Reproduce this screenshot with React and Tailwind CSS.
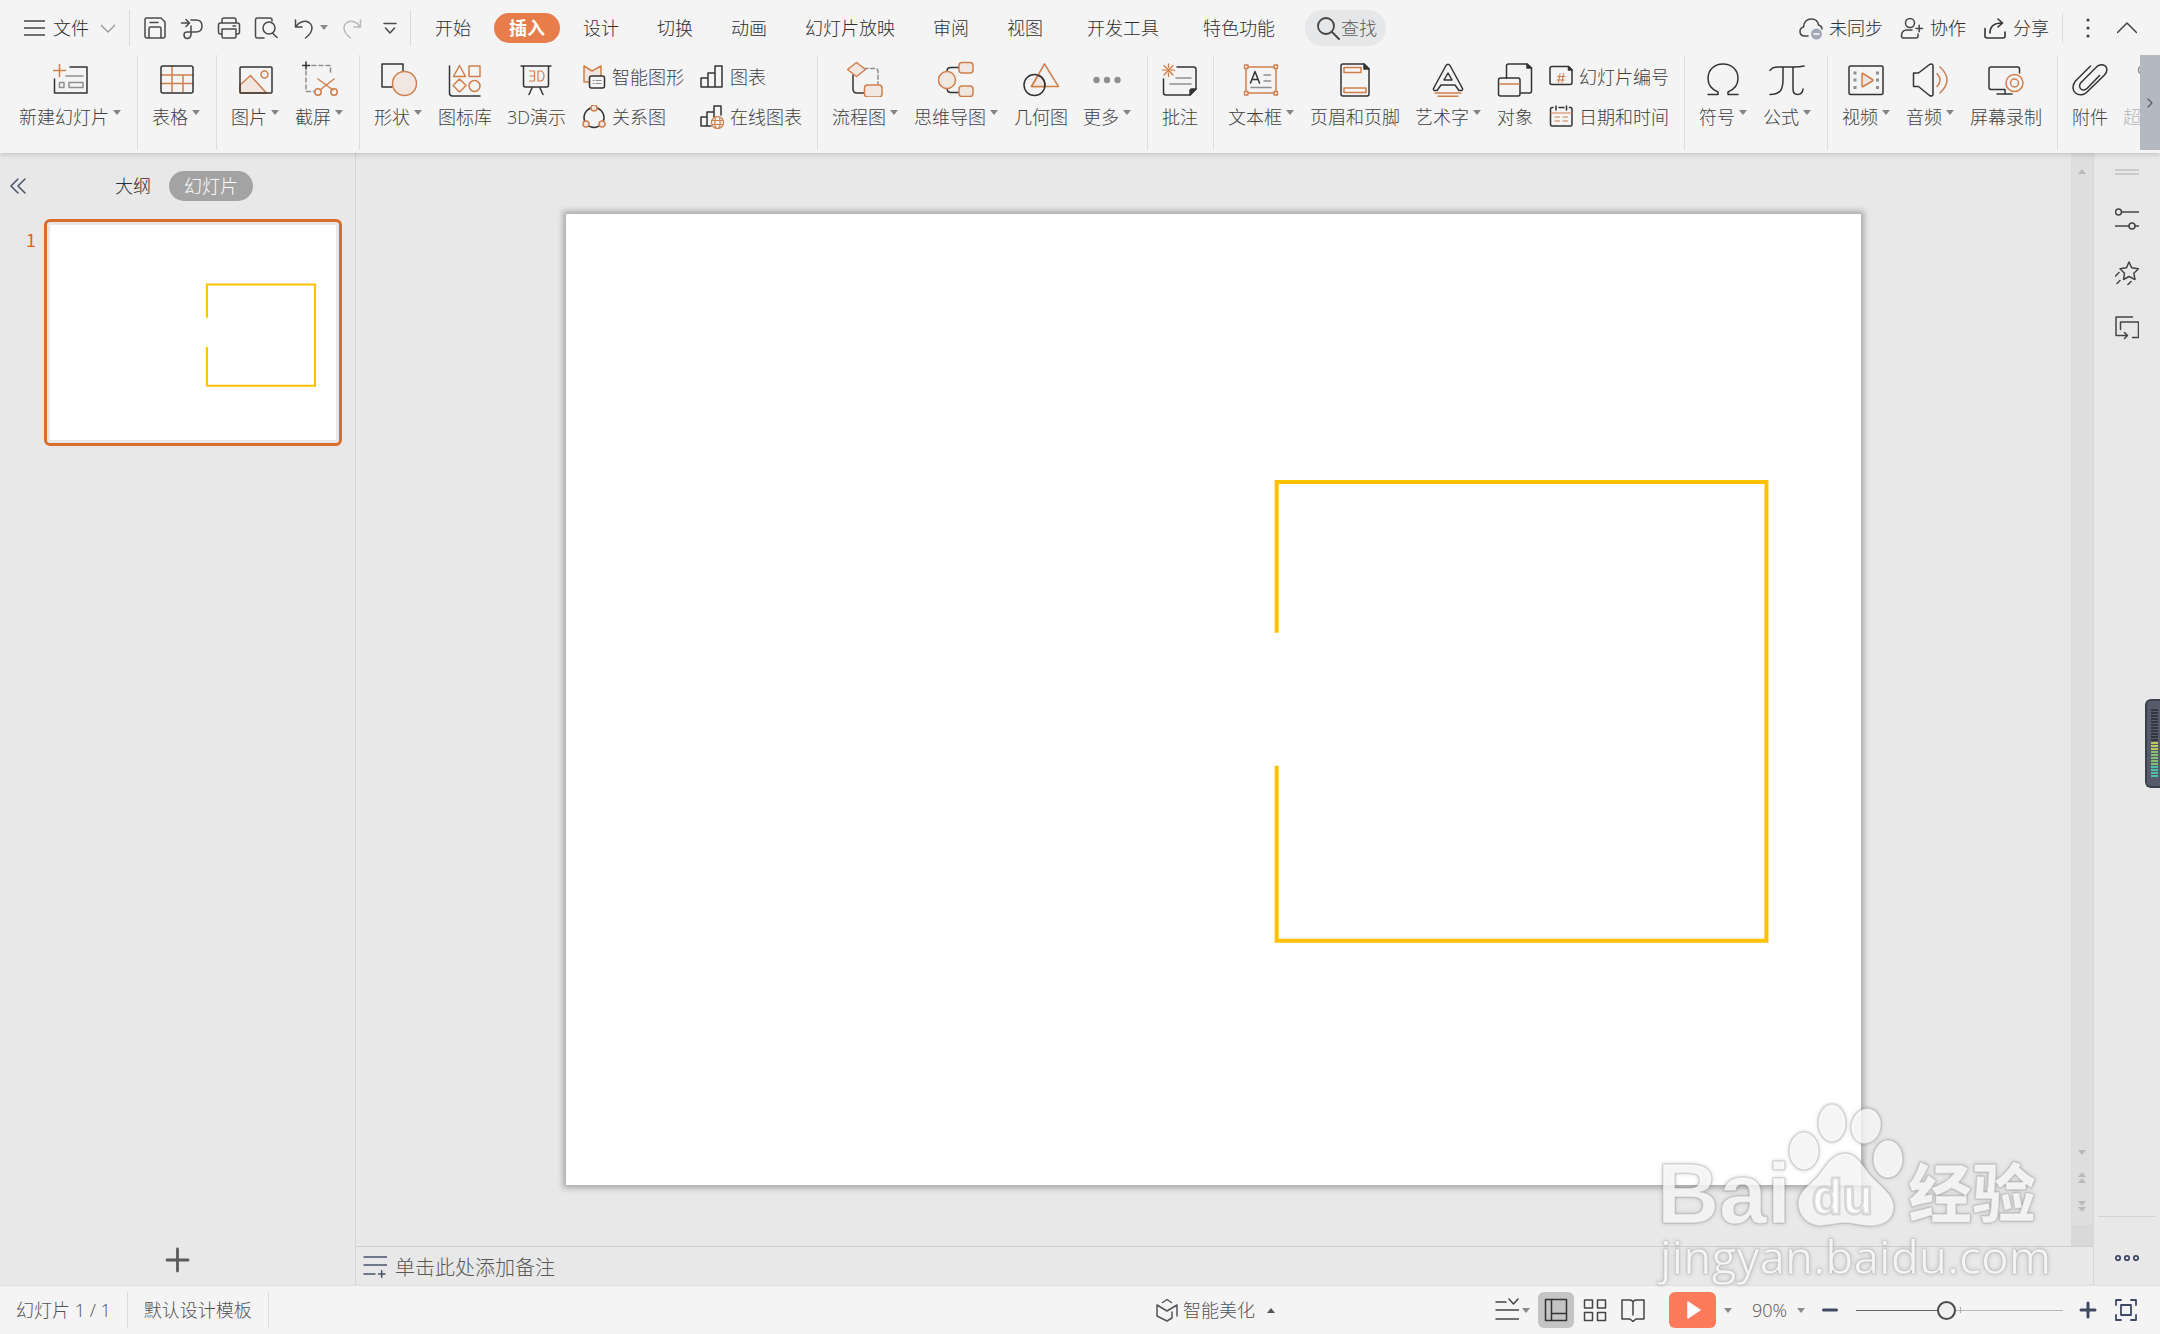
import { useState } from "react";

const OR = "#cf7f4b";
const TINT = "#f2e6e0";
const GREY = "#8f8f8f";

function Icon({ className = "w-6 h-6", box = 24, children, ...rest }) {
  return (
    <svg className={`${className} shrink-0`} viewBox={`0 0 ${box} ${box}`} fill="none" stroke="#333" strokeWidth="1.5" strokeLinecap="round" strokeLinejoin="round" aria-hidden="true" {...rest}>
      {children}
    </svg>
  );
}

const Big = ({ children }) => <Icon className="w-9 h-9" box={36}>{children}</Icon>;

function Caret({ up = false, className = "" }) {
  return (
    <svg className={`w-2 h-[5px] shrink-0 ${className}`} viewBox="0 0 8 5" aria-hidden="true">
      <path d={up ? "M0 5H8L4 0Z" : "M0 0H8L4 5Z"} fill="currentColor" />
    </svg>
  );
}

const NewSlideIcon = () => (
  <Big>
    <path d="M17 6H34V32H1.500V18" />
    <path d="M13 15H30M6.500 21.500h4.500v5h-4.500zM16 21.500h14v5H16z" stroke={GREY} />
    <path d="M0.500 9.500H12.500M6.500 3.500V15.500" stroke={OR} />
  </Big>
);
const TableIcon = () => (
  <Big>
    <path d="M13 5V31M24 14V31M2 14H34M2 22.500H34" stroke={OR} />
    <rect x="2" y="5" width="32" height="27" rx="2" />
  </Big>
);
const PictureIcon = () => (
  <Big>
    <path d="M2 24L12.500 14.500L28.500 32H2Z" fill={TINT} stroke={OR} />
    <circle cx="26.500" cy="13.500" r="3.500" stroke={OR} />
    <rect x="2" y="6" width="32" height="26" rx="1" />
  </Big>
);
const ClipIcon = () => (
  <Big>
    <path d="M10 4.500H28.500V14M4 10V30.500H12" stroke={GREY} strokeDasharray="4 3" />
    <path d="M0.500 4.500H7.500M4 1V8" />
    <path d="M16 18L31 29M32 18L18 29" stroke={OR} />
    <circle cx="16" cy="31" r="3.200" stroke={OR} />
    <circle cx="32" cy="31" r="3.200" stroke={OR} />
  </Big>
);
const ShapesIcon = () => (
  <Big>
    <path d="M11 26H1V3H22V10" />
    <circle cx="23.500" cy="22.500" r="12" fill={TINT} stroke={OR} />
  </Big>
);
const IconLibIcon = () => (
  <Big>
    <path d="M2.500 5V32Q2.500 35 5.500 35H33" />
    <path d="M12.500 4.500L18.500 15.500H6.500ZM22 5h11v10.500H22zM12.500 18L19 24.500L12.500 31L6 24.500Z" stroke={OR} />
    <circle cx="27.500" cy="25" r="5.500" stroke={OR} />
  </Big>
);
const Show3DIcon = () => (
  <Big>
    <path d="M3 5H33M5.500 5V24Q5.500 26 7.500 26H28.500Q30.500 26 30.500 24V5M14 27L11 33.500M22 27L25 33.500" />
    <path d="M11.500 10H16.500V20H11.500M12 15H16.500M20 10H22Q26 10 26 15T22 20H20Z" stroke={OR} strokeWidth="1.200" />
  </Big>
);
const SmartArtIcon = () => (
  <Icon>
    <path d="M7 17H2V1L10 6L19 1V11" fill={TINT} stroke={OR} />
    <rect x="7.500" y="11" width="15" height="12" rx="2" fill="#f4f4f4" />
    <path d="M11 15.500h1M14 15.500h5M11 18.500h1M14 18.500h5" stroke={GREY} strokeWidth="1.200" />
  </Icon>
);
const RelationIcon = () => (
  <Icon>
    <circle cx="12" cy="12.500" r="10" />
    <g fill={TINT} stroke={OR}>
      <circle cx="12" cy="3" r="3" />
      <circle cx="4" cy="19" r="3" />
      <circle cx="20" cy="19" r="3" />
    </g>
  </Icon>
);
const ChartIcon = () => (
  <Icon>
    <path d="M1 13h7v9H1zM8 8h7v14H8zM15 1h7v21h-7z" />
  </Icon>
);
const OnlineChartIcon = () => (
  <Icon>
    <path d="M11 21H1V12H7M7 21V7H14V12M14 11V1H21V10" />
    <g stroke={OR} strokeWidth="1.200" fill="#f4f4f4">
      <circle cx="17.500" cy="17.500" r="6" />
      <ellipse cx="17.500" cy="17.500" rx="2.600" ry="6" />
      <path d="M12 15.500H23M12 19.500H23" />
    </g>
  </Icon>
);
const FlowIcon = () => (
  <Big>
    <path d="M6 14V28Q6 32 10 32H17" />
    <path d="M17 7.500H28Q31 7.500 31 10.500V24" stroke={GREY} strokeDasharray="4 2.500" />
    <path d="M9.500 1.500L18.500 8.500L9.500 15.500L0.500 8.500Z" fill={TINT} stroke={OR} />
    <rect x="17.500" y="24" width="17.500" height="12" rx="3" fill={TINT} stroke={OR} />
  </Big>
);
const MindMapIcon = () => (
  <Big>
    <path d="M9 12V10Q9 6.500 13 6.500H21M9 25V27Q9 31.500 13 31.500H21" />
    <g fill={TINT} stroke={OR}>
      <circle cx="9" cy="19" r="8.500" />
      <rect x="21" y="1.500" width="14" height="10.500" rx="3" />
      <rect x="21" y="25" width="14" height="10.500" rx="3" />
    </g>
  </Big>
);
const GeometryIcon = () => (
  <Big>
    <circle cx="11.500" cy="24" r="10.500" />
    <path d="M21.500 3L35.500 25.500H8.500Z" stroke={OR} />
    <path d="M16 14.500L8.500 25.500H21.500Q22 19 16 14.500Z" fill={TINT} stroke="none" />
    <path d="M14.500 15.500L8.500 25.500H21.500" stroke={OR} />
    <path d="M15 14.200A10.500 10.500 0 0 1 21.500 27" />
  </Big>
);
const MoreIcon = () => (
  <Big>
    <g fill={GREY} stroke="none">
      <circle cx="7.500" cy="19" r="3.200" />
      <circle cx="18" cy="19" r="3.200" />
      <circle cx="28.500" cy="19" r="3.200" />
    </g>
  </Big>
);
const CommentIcon = () => (
  <Big>
    <path d="M15 6H31.500Q34 6 34 8.500V28L28 34H4Q1.500 34 1.500 31.500V18" />
    <path d="M34 28L28 34V30Q28 28 30 28Z" fill="#333" />
    <path d="M14 17H29M8 23H29" stroke={GREY} />
    <path d="M6.500 3v3.500M6.500 12v3.500M0.500 9.200H4M9 9.200h3.500M2 4.500l9 9.500M11 4.500l-9 9.500" stroke={OR} strokeWidth="1.300" />
  </Big>
);
const TextBoxIcon = () => (
  <Big>
    <path d="M5 6H31M5 32H31M3 8V30M33 8V30" stroke={OR} />
    <path d="M1.500 4h3.500v3.500h-3.500zM31 4h3.500v3.500H31zM1.500 30.500h3.500V34h-3.500zM31 30.500h3.500V34H31z" stroke={OR} strokeWidth="1.300" />
    <path d="M7.500 22L12 10.500L16.500 22M9 18.500H15" />
    <path d="M21 14H27.500M21 20H27.500M8 26.500H28" stroke={GREY} />
  </Big>
);
const HeaderFooterIcon = () => (
  <Big>
    <path d="M27 3H6Q4 3 4 5V33Q4 35 6 35H30Q32 35 32 33V8Z" />
    <path d="M27 3V8H32Z" fill="#333" />
    <path d="M7 6.500h17v5H7zM7 27h22v4.500H7z" stroke={OR} />
  </Big>
);
const WordArtIcon = () => (
  <Big>
    <path d="M16 4.500Q18 2 20 4.500L32.500 27.500Q33 29.500 31 29.500H29L25 24H11L7 29.500H5Q3 29.500 3.500 27.500Z" />
    <path d="M18 12L22 19H14Z" />
    <path d="M5 32H31M8 35.200H28" stroke={OR} />
  </Big>
);
const ObjectIcon = () => (
  <Big>
    <path d="M9.500 17V5Q9.500 3 11.500 3H30L34.500 7V30Q34.500 32 32.500 32H24" />
    <path d="M30 3V7H34.500Z" fill="#333" />
    <rect x="1.500" y="17" width="21.500" height="18" rx="2" />
    <path d="M2.500 23H22" stroke={OR} />
  </Big>
);
const SlideNumIcon = () => (
  <Icon>
    <path d="M19.500 1.500H3Q1 1.500 1 3.500V18Q1 19.500 3 19.500H21Q23 19.500 23 17.500V5Z" />
    <path d="M19.500 1.500V5H23Z" fill="#333" />
    <path d="M8.500 11.500H16M8 15H15.500M11 8.500L9.500 17.500M14.500 8.500L13 17.500" stroke={OR} strokeWidth="1.100" />
  </Icon>
);
const DateIcon = () => (
  <Icon>
    <path d="M4 2.500H3Q1.500 2.500 1.500 4.500V19.500Q1.500 21 3 21H21.500Q23 21 23 19.500V4.500Q23 2.500 21.500 2.500H20.500M7 1V5M17.500 1V5M10 2.500H15" />
    <path d="M2 8H22.500M6 12h4.500M14 12h4.500M6 16h4.500M14 16h4.500" stroke={OR} strokeWidth="1.200" />
  </Icon>
);
const OmegaIcon = () => (
  <Big>
    <path d="M3 33.500H13V31C7 28.500 3 24 3 17.500C3 8 10 3 18 3S33 8 33 17.500C33 24 29 28.500 23 31V33.500H33" />
  </Big>
);
const PiIcon = () => (
  <Big>
    <path d="M1 9.500Q3 6 9 6H25Q31 6 35 5M14 6V18C14 28 12 33.500 1 33.500M24 6V28Q24 33.500 28.500 33.500Q33.500 33.500 34 28" />
  </Big>
);
const VideoIcon = () => (
  <Big>
    <rect x="1" y="5" width="34" height="28.500" rx="1.500" />
    <path d="M7 10.500v3M7 17.500v3M7 25v3M29.500 10.500v3M29.500 17.500v3M29.500 25v3" stroke={GREY} strokeWidth="3" strokeLinecap="butt" />
    <path d="M14 13Q14 12 15 12.500L24.500 18.500Q25.500 19.200 24.500 20L15 25.500Q14 26 14 25Z" fill={TINT} stroke={OR} />
  </Big>
);
const AudioIcon = () => (
  <Big>
    <path d="M1.500 12H6.500L17.500 3.500Q21 2 21 5V33Q21 36 17.500 34.500L6.500 25.500H1.500Z" />
    <path d="M25 12.500Q31 19 25 25.500M28 6Q42 19 28 32" stroke={OR} />
  </Big>
);
const ScreenRecIcon = () => (
  <Big>
    <path d="M31.500 12V8Q31.500 6 29.500 6H3Q1 6 1 8V26Q1 28.500 3 28.500H17M17 29V33M9 33H24" />
    <circle cx="26.500" cy="22" r="8.500" fill="#f4f4f4" stroke={OR} />
    <circle cx="26.500" cy="22" r="4" stroke={OR} />
  </Big>
);
const AttachIcon = () => (
  <Big>
    <path d="M18.500 5L3.500 20C-0.500 25 1 30 3.500 32C7 35 12 34 15 31L32.500 14C37 9 34 5 32.500 4.500C30 3 26 4 24 6.500L9 21.500C6 25 8.500 28 9.500 28.500C11 29.500 14 28.500 15.500 27L27.500 14.500" />
  </Big>
);
const LinkIcon = () => (
  <Icon className="w-4 h-9" viewBox="0 0 16 36">
    <path d="M15.500 6Q13.500 9 15.500 12" stroke={GREY} />
  </Icon>
);

function RibbonButton({ icon: I, label, caret, dim }) {
  return (
    <button className="shrink-0 flex flex-col items-center pt-[6px]">
      <I />
      <span className={`mt-2 flex leading-6 text-lg whitespace-nowrap ${dim ? "text-[#b5b5b5]" : "text-[#404040]"}`}>
        {label}
        {caret && <Caret className="mt-[5px] ml-1 mr-px text-[#858585]" />}
      </span>
    </button>
  );
}

function RibbonStack({ items }) {
  return (
    <div className="shrink-0 flex flex-col items-start gap-4 pt-[10px] pl-px">
      {items.map(([I, label]) => (
        <button key={label} className="h-6 flex items-center gap-[6px] text-lg leading-6 text-[#404040] whitespace-nowrap">
          <I />
          {label}
        </button>
      ))}
    </div>
  );
}

const Divider = () => <div className="shrink-0 w-px -mr-px h-[95px] bg-[#dedede]" />;

const ribbon = [
  { icon: NewSlideIcon, label: "新建幻灯片", caret: true },
  "|",
  { icon: TableIcon, label: "表格", caret: true },
  "|",
  { icon: PictureIcon, label: "图片", caret: true },
  { icon: ClipIcon, label: "截屏", caret: true },
  "|",
  { icon: ShapesIcon, label: "形状", caret: true },
  { icon: IconLibIcon, label: "图标库" },
  { icon: Show3DIcon, label: "3D演示" },
  [[SmartArtIcon, "智能图形"], [RelationIcon, "关系图"]],
  [[ChartIcon, "图表"], [OnlineChartIcon, "在线图表"]],
  "|",
  { icon: FlowIcon, label: "流程图", caret: true },
  { icon: MindMapIcon, label: "思维导图", caret: true },
  { icon: GeometryIcon, label: "几何图" },
  { icon: MoreIcon, label: "更多", caret: true },
  "|",
  { icon: CommentIcon, label: "批注" },
  "|",
  { icon: TextBoxIcon, label: "文本框", caret: true },
  { icon: HeaderFooterIcon, label: "页眉和页脚" },
  { icon: WordArtIcon, label: "艺术字", caret: true },
  { icon: ObjectIcon, label: "对象" },
  [[SlideNumIcon, "幻灯片编号"], [DateIcon, "日期和时间"]],
  "|",
  { icon: OmegaIcon, label: "符号", caret: true },
  { icon: PiIcon, label: "公式", caret: true },
  "|",
  { icon: VideoIcon, label: "视频", caret: true },
  { icon: AudioIcon, label: "音频", caret: true },
  { icon: ScreenRecIcon, label: "屏幕录制" },
  "|",
  { icon: AttachIcon, label: "附件" },
  { icon: LinkIcon, label: "超", dim: true },
];

const tabs = ["开始", "插入", "设计", "切换", "动画", "幻灯片放映", "审阅", "视图"];
const extraTabs = ["开发工具", "特色功能"];

function Tab({ name, active, onClick }) {
  return (
    <button
      onClick={onClick}
      className={`h-[30px] px-[15px] rounded-full text-lg leading-6 whitespace-nowrap ${active ? "bg-[#e87d4c] text-white font-bold" : "text-[#2e2e2e]"}`}
    >
      {name}
    </button>
  );
}

function TopBar() {
  const [active, setActive] = useState("插入");
  return (
    <div className="h-[55px] flex items-center pl-6 pr-[23px] text-lg leading-6 text-[#2e2e2e]">
      <button className="flex items-center whitespace-nowrap">
        <Icon className="w-[21px] h-6 mr-2" stroke="#444"><path d="M0 4H24M0 12H24M0 20H24" /></Icon>
        文件
        <Icon className="w-[14px] h-6 ml-3" stroke="#9a9a9a"><path d="M0 7L12 19L24 7" strokeWidth="2.400" /></Icon>
      </button>
      <div className="ml-[14px] w-px h-9 bg-[#dadada]" />
      <div className="flex items-center gap-[13px] ml-[13px]">
        <button aria-label="保存">
          <Icon stroke="#4a4a4a">
            <path d="M3.500 2H18L22 6V20Q22 22 20 22H4Q2 22 2 20V3.500Q2 2 3.500 2ZM6 22V12.500Q6 11 7.500 11H16.500Q18 11 18 12.500V22M7 6.500H15" />
          </Icon>
        </button>
        <button aria-label="输出为PDF">
          <Icon stroke="#4a4a4a">
            <path d="M1.500 7H9M6 3.500L9.500 7L6 10.500M11 4H16Q22 4 22 10T16 16H7Q4 16 4 19T7 22.500T11 19V10" />
          </Icon>
        </button>
        <button aria-label="打印">
          <Icon stroke="#4a4a4a">
            <path d="M5 7V4Q5 2 7 2H17Q19 2 19 4V7M5 18H3.500Q1.500 18 1.500 16V9Q1.500 7 3.500 7H20.500Q22.500 7 22.500 9V16Q22.500 18 20.500 18H19M5 13H19V20.500Q19 22 17.500 22H6.500Q5 22 5 20.500ZM16 10H18.500" />
          </Icon>
        </button>
        <button aria-label="打印预览">
          <Icon stroke="#4a4a4a">
            <path d="M10 22H3.500Q1.500 22 1.500 20V4Q1.500 2 3.500 2H16Q18 2 18 4V5" />
            <circle cx="15" cy="12" r="6" />
            <path d="M18.500 17L23 21.500" />
          </Icon>
        </button>
        <button aria-label="撤销" className="flex items-center gap-[5px] text-[#8a8a8a]">
          <Icon stroke="#4a4a4a"><path d="M4.500 4V11H11M4.500 11C8 5.500 14 4 18 6.500C23 10 21.500 17 14.500 22" /></Icon>
          <Caret />
        </button>
        <button aria-label="恢复">
          <Icon stroke="#b9b9b9"><path d="M19.500 4V11H13M19.500 11C16 5.500 10 4 6 6.500C1 10 2.500 17 9.500 22" /></Icon>
        </button>
        <button aria-label="自定义快速访问工具栏">
          <Icon stroke="#4a4a4a"><path d="M6 7.500H18M7.500 12L12 17L16.500 12" /></Icon>
        </button>
      </div>
      <div className="ml-2 w-px h-9 bg-[#dadada]" />
      <nav className="flex gap-2 ml-[9px]">
        {tabs.map((t) => <Tab key={t} name={t} active={t === active} onClick={() => setActive(t)} />)}
      </nav>
      <nav className="flex gap-[14px] ml-[14px]">
        {extraTabs.map((t) => <Tab key={t} name={t} active={t === active} onClick={() => setActive(t)} />)}
      </nav>
      <label className="ml-[15px] h-9 pl-3 pr-2 flex items-center rounded-full bg-[#e6e7e9]">
        <Icon stroke="#444" strokeWidth="1.800">
          <circle cx="9" cy="10" r="8" />
          <path d="M15 16L22 23" />
        </Icon>
        <input aria-label="查找" placeholder="查找" className="w-[37px] bg-transparent outline-none placeholder:text-[#5c5c5c]" />
      </label>

      <div className="ml-auto flex items-center gap-[17px] whitespace-nowrap">
        <button className="flex items-center gap-[6px]">
          <Icon stroke="#444">
            <path d="M9 20H6Q1 20 1 15.500Q1 12 4.500 11C5 6 8 3 12.500 3C17 3 19 6 19.500 9Q23 10 23 13" />
            <circle cx="17.500" cy="18" r="5.500" fill="#a0a8b8" stroke="none" />
            <path d="M15 18H20" stroke="#fff" />
          </Icon>
          未同步
        </button>
        <button className="flex items-center gap-[6px]">
          <Icon stroke="#444">
            <circle cx="10" cy="7" r="4.500" />
            <path d="M18 18V20Q18 22 16 22H3.500Q1.500 22 1.500 20Q1.500 14 7 14H12M16 12.500H22.500M19.200 9.200V15.800" />
          </Icon>
          协作
        </button>
        <button className="flex items-center gap-[6px]">
          <Icon stroke="#333" strokeWidth="1.600">
            <path d="M2 12.500V20Q2 22 4 22H20Q22 22 22 20V16M7 17Q7 7 19 7M15 3L19.500 7L15 11" />
          </Icon>
          分享
        </button>
      </div>
      <div className="ml-[13px] w-px h-[30px] bg-[#dadada]" />
      <button aria-label="更多选项" className="ml-[13px]">
        <Icon fill="#444" stroke="none">
          <circle cx="12" cy="4" r="1.600" />
          <circle cx="12" cy="12" r="1.600" />
          <circle cx="12" cy="20" r="1.600" />
        </Icon>
      </button>
      <button aria-label="收起功能区" className="ml-[17px]">
        <Icon className="w-5 h-6" box={20} stroke="#444"><path d="M0.500 14.500L10 5L19.500 14.500" /></Icon>
      </button>
    </div>
  );
}

function Ribbon() {
  return (
    <div className="h-[98px] flex">
      <div className="flex-1 min-w-0 overflow-hidden flex items-start gap-[15px] pl-[19px]">
        {ribbon.map((item, i) => {
          if (item === "|") return <Divider key={i} />;
          if (Array.isArray(item)) return <RibbonStack key={i} items={item} />;
          return <RibbonButton key={i} {...item} />;
        })}
      </div>
      <button aria-label="向右滚动" className="w-5 h-[95px] flex items-center justify-center bg-[#b4b8c1]">
        <Icon className="w-3 h-3" box={12} stroke="#555b68" strokeWidth="1.200"><path d="M4 2L8 6L4 10" /></Icon>
      </button>
    </div>
  );
}

// the open rectangle drawn on slide 1, in slide coordinates
function SlideArt({ stroke }) {
  return (
    <svg viewBox="0 0 1296 972" className="block w-full h-full" fill="none" stroke="#ffc000" strokeWidth={stroke}>
      <path vectorEffect="non-scaling-stroke" d="M711 419V268H1201V727H711V552" />
    </svg>
  );
}

function SlidePanel() {
  return (
    <aside className="w-[356px] shrink-0 border-r border-[#d5d5d5] flex flex-col pt-[18px] text-lg leading-6">
      <div className="flex items-center h-[30px] pl-[6px]">
        <button aria-label="收起窗格">
          <Icon stroke="#47536b"><path d="M12 5L5 12L12 19M19 5L12 12L19 19" /></Icon>
        </button>
        <button className="ml-[85px] text-[#2e2e2e]">大纲</button>
        <button className="ml-[18px] h-[30px] px-[15px] rounded-full bg-[#a3a3a3] text-white">幻灯片</button>
      </div>
      <ol className="mt-[18px] pr-[13px]">
        <li className="flex">
          <span className="w-11 pt-2 pr-2 text-right font-normal font-['Noto_Sans_CJK_SC',sans-serif] text-[#dd631f]">1</span>
          <button aria-label="幻灯片 1" className="flex-1 aspect-[298/227] rounded-md border-3 border-[#d96d2d] p-[3px] bg-[#e8e8e8]">
            <div className="w-full h-full bg-white"><SlideArt stroke={2} /></div>
          </button>
        </li>
      </ol>
      <button aria-label="新建幻灯片" className="mt-auto mb-[11px] self-center">
        <Icon className="w-7 h-7" box={28} stroke="#5a5a5a" strokeWidth="2.800"><path d="M3 14H24M13.500 3V25" /></Icon>
      </button>
    </aside>
  );
}

function ScrollBar() {
  return (
    <div className="w-[22px] shrink-0 flex flex-col items-center bg-[#dedede] text-[#b9b9b9]">
      <Caret up className="mt-4" />
      <div className="mt-auto flex flex-col items-center">
        <Caret />
        <Caret up className="mt-[17px]" />
        <Caret up className="mt-px" />
        <Caret className="mt-[18px]" />
        <Caret className="mt-px" />
      </div>
      <div className="mt-[13px] w-full h-[21px] bg-[#d9d9d9]" />
    </div>
  );
}

function SidePanel() {
  return (
    <aside className="w-[67px] shrink-0 border-l border-[#d5d5d5] flex flex-col items-center pt-[16px]">
      <div className="w-6 h-[6px] border-y-2 border-[#cbcbcb]" />
      <button aria-label="属性" className="mt-8">
        <Icon stroke="#444">
          <circle cx="3.500" cy="5" r="3" />
          <path d="M6.500 5H24M0 19H14M20 19H24" />
          <circle cx="17" cy="19" r="3" />
        </Icon>
      </button>
      <button aria-label="动画" className="mt-[30px]">
        <Icon stroke="#444">
          <path d="M14 1L16.800 6.800L23.500 7.800L18.800 12.200L20 18.500L14 15.500L8.500 18.500L9.500 12.200L5 7.800L11.500 6.800Z" />
          <path d="M4 11.500L0.500 15M5 19.500L2 22.500M16 20.500L12.500 24" />
        </Icon>
      </button>
      <button aria-label="切换" className="mt-[31px]">
        <Icon stroke="#444">
          <path d="M17.500 1H1V19.500H12M9.500 16.500L12.500 19.500L9.500 22.500M5.500 13.500V6H23.500V21.500H17.500" />
        </Icon>
      </button>
      <div className="mt-auto w-[58px] h-px bg-[#d3d3d3]" />
      <button aria-label="更多" className="mt-[29px] mb-[15px]">
        <Icon stroke="#3e4a66" strokeWidth="1.800">
          <circle cx="3" cy="12" r="2.200" />
          <circle cx="12" cy="12" r="2.200" />
          <circle cx="21" cy="12" r="2.200" />
        </Icon>
      </button>
    </aside>
  );
}

function Editor() {
  return (
    <main className="flex-1 min-w-0 flex flex-col">
      <div className="flex-1 min-h-0 flex">
        <div className="flex-1 min-w-0 flex items-center justify-center">
          <div className="h-8/9 aspect-[4/3] bg-white shadow-[0_0_6px_3px_rgba(0,0,0,0.28)]">
            <SlideArt stroke={4} />
          </div>
        </div>
        <ScrollBar />
      </div>
      <label className="h-[39px] flex items-center gap-2 pl-[7px] border-t border-[#d0d0d0]">
        <Icon stroke="#47536b">
          <path d="M1 3H24M1 11H24M1 20H12M15.500 20H22M18.700 16.700V23.300" />
        </Icon>
        <input aria-label="备注" placeholder="单击此处添加备注" className="flex-1 min-w-0 pt-1 bg-transparent outline-none text-xl leading-6 placeholder:text-[#585858]" />
      </label>
    </main>
  );
}

function StatusBar() {
  return (
    <footer className="h-[49px] shrink-0 flex items-center pl-4 pr-[22px] bg-[#f4f4f4] border-t border-[#e0e0e0] text-lg leading-6 text-[#525252] whitespace-nowrap">
      <span>幻灯片 1 / 1</span>
      <div className="mx-4 w-px h-9 bg-[#dcdcdc]" />
      <span>默认设计模板</span>
      <div className="ml-4 w-px h-9 bg-[#dcdcdc]" />

      <button className="ml-auto flex items-center">
        <Icon stroke="#555">
          <path d="M7.500 4.500L12 1.500L16.500 4.500M2 7L12 13L22 7V18M2 7V18L12 23L17 20V14" />
        </Icon>
        <span className="ml-1">智能美化</span>
        <Caret up className="ml-3 text-[#555]" />
      </button>

      <button aria-label="备注显示" className="ml-[220px] flex items-center gap-[3px] text-[#8a8a8a]">
        <Icon stroke="#444"><path d="M1 4H11M1 12H24M1 21H24M14 1L18.500 6L23 1" /></Icon>
        <Caret />
      </button>
      <button aria-label="普通视图" className="ml-2 w-9 h-9 flex items-center justify-center rounded-md bg-[#c4c4c4]">
        <Icon stroke="#333"><path d="M1.500 1.500H22.500V22.500H1.500ZM7.500 1.500V22.500M7.500 15.500H22.500" /></Icon>
      </button>
      <button aria-label="幻灯片浏览" className="ml-[9px]">
        <Icon stroke="#444"><path d="M1.500 2h8v8h-8zM14.500 2h8v8h-8zM1.500 14.500h8v8h-8zM14.500 14.500h8v8h-8z" /></Icon>
      </button>
      <button aria-label="阅读视图" className="ml-[14px]">
        <Icon stroke="#444"><path d="M12 4Q11 2 9 2H1V21H9L12 23.500L15 21H23V2H15Q13 2 12 4V17" /></Icon>
      </button>
      <button aria-label="从当前开始播放" className="ml-6 w-[47px] h-9 flex items-center justify-center rounded-md bg-[#fd7a5a]">
        <Icon fill="#fff" stroke="#fff"><path d="M7 4L19 12L7 20Z" /></Icon>
      </button>
      <Caret className="ml-2 text-[#8a8a8a]" />
      <button className="ml-5 flex items-center gap-2">
        <span className="w-[37px] text-left">90%</span>
        <Caret className="text-[#8a8a8a]" />
      </button>
      <button aria-label="缩小" className="ml-[13px]">
        <Icon stroke="#3e4a66" strokeWidth="3"><path d="M5.500 12H18.500" /></Icon>
      </button>
      <div className="ml-[14px] relative flex items-center w-[207px]">
        <div className="absolute left-1/2 w-px h-[6px] bg-[#aaa]" />
        <input
          type="range"
          aria-label="缩放"
          min="0"
          max="100"
          defaultValue="43"
          className="relative w-full h-5 appearance-none bg-transparent [&::-webkit-slider-runnable-track]:h-px [&::-webkit-slider-runnable-track]:bg-linear-to-r [&::-webkit-slider-runnable-track]:from-[#666] [&::-webkit-slider-runnable-track]:from-43% [&::-webkit-slider-runnable-track]:to-[#b5b5b5] [&::-webkit-slider-runnable-track]:to-43% [&::-webkit-slider-thumb]:appearance-none [&::-webkit-slider-thumb]:w-[19px] [&::-webkit-slider-thumb]:h-[19px] [&::-webkit-slider-thumb]:-mt-[9px] [&::-webkit-slider-thumb]:rounded-full [&::-webkit-slider-thumb]:border-2 [&::-webkit-slider-thumb]:border-solid [&::-webkit-slider-thumb]:border-[#4a4a4a] [&::-webkit-slider-thumb]:bg-[#efefef]"
        />
      </div>
      <button aria-label="放大" className="ml-[13px]">
        <Icon stroke="#3e4a66" strokeWidth="3"><path d="M5 12H19M12 5V19" /></Icon>
      </button>
      <button aria-label="最佳显示比例" className="ml-[14px]">
        <Icon stroke="#3e4a66" strokeWidth="1.800"><path d="M2 7V2H7M17 2H22V7M22 17V22H17M7 22H2V17M7 7H17V17H7Z" /></Icon>
      </button>
    </footer>
  );
}

function Watermark() {
  return (
    <svg className="absolute right-[110px] bottom-[39px] w-[400px] h-[200px] pointer-events-none drop-shadow-[0_0_2px_rgba(0,0,0,0.25)]" viewBox="0 0 400 200" aria-hidden="true">
      <g fill="#fff" fillOpacity="0.8" stroke="#000" strokeOpacity="0.12" strokeWidth="1.500" strokeLinejoin="round">
        <ellipse cx="154" cy="56" rx="15" ry="19" />
        <ellipse cx="182" cy="28" rx="14" ry="19" />
        <ellipse cx="216" cy="31" rx="15" ry="18" transform="rotate(14 216 31)" />
        <ellipse cx="238" cy="64" rx="15" ry="19" />
        <path d="M195 58C206 58 211 68 218 77C228 90 244 98 244 112C244 126 232 131 220 131C210 131 204 128 195 128C186 128 178 131 170 131C156 130 148 120 148 108C148 95 162 89 170 78C177 68 184 58 195 58Z" />
        <text x="7" y="128" fontFamily="'Liberation Sans', Arial, sans-serif" fontWeight="700" fontSize="86">Bai</text>
        <text x="162" y="119" fontFamily="'Liberation Sans', Arial, sans-serif" fontWeight="700" fontSize="50" strokeWidth="3">du</text>
        <text x="258" y="122" fontFamily="'Noto Sans CJK SC', sans-serif" fontWeight="900" fontSize="64">经验</text>
        <text x="10" y="179" fontFamily="'Open Sans', sans-serif" fontWeight="400" fontSize="46" strokeWidth="1">jingyan.baidu.com</text>
      </g>
    </svg>
  );
}

// level meter docked to the right edge of the screen
function Meter() {
  const bars = Array.from({ length: 23 }, (_, i) => i);
  return (
    <div className="absolute right-0 top-[699px] w-[15px] h-[89px] rounded-l-md border-2 border-r-0 border-[#3c404b] bg-[#555b69] pt-2 pl-1 flex flex-col gap-px">
      {bars.map((i) => (
        <div key={i} className={`w-[7px] h-[2px] ${i < 11 ? "bg-[#333741]" : i < 14 ? "bg-[#b9c662]" : i < 19 ? "bg-[#84bf78]" : "bg-[#4fc0a8]"}`} />
      ))}
    </div>
  );
}

export default function App() {
  return (
    <div className="relative h-screen flex flex-col overflow-hidden bg-[#e8e8e8] font-light font-['Open_Sans','Noto_Sans_CJK_SC',sans-serif]">
      <header className="relative shrink-0 bg-[#f4f4f4] shadow-[0_1px_6px_rgba(0,0,0,0.2)]">
        <TopBar />
        <Ribbon />
      </header>
      <div className="flex-1 min-h-0 flex">
        <SlidePanel />
        <Editor />
        <SidePanel />
      </div>
      <StatusBar />
      <Watermark />
      <Meter />
    </div>
  );
}
